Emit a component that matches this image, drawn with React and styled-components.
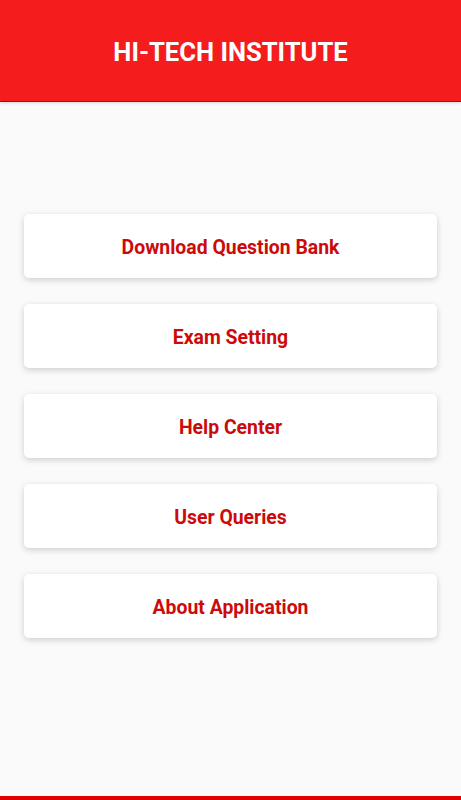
import React from 'react';
import styled, { createGlobalStyle } from 'styled-components';

const GlobalStyle = createGlobalStyle`
  html, body {
    margin: 0;
    padding: 0;
    background: #fafafa;
    font-family: Roboto, "Liberation Sans", Arial, sans-serif;
  }
`;

const Screen = styled.div`
  width: 100%;
  height: 800px;
  display: flex;
  flex-direction: column;
  background: #fafafa;
`;

const Header = styled.header`
  height: 102px;
  flex-shrink: 0;
  box-sizing: border-box;
  padding-top: 3px;
  background: #f41c1c;
  border-bottom: 1px solid #a11010;
  display: flex;
  align-items: center;
  justify-content: center;
  box-shadow: 0 1px 3px rgba(0, 0, 0, 0.15);
`;

const Title = styled.h1`
  margin: 0;
  color: #ffffff;
  font-size: 25.6px;
  font-weight: 700;
`;

const Menu = styled.main`
  flex: 1;
  display: flex;
  flex-direction: column;
  gap: 26px;
  padding: 112px 24px 0;
`;

const MenuButton = styled.button`
  height: 64px;
  width: 100%;
  padding: 2px 0 0;
  border: none;
  border-radius: 5px;
  background: #ffffff;
  box-shadow: 0 2px 6px rgba(0, 0, 0, 0.18);
  color: #cc0a0a;
  font-family: inherit;
  font-size: 19.4px;
  font-weight: 700;
  cursor: pointer;
`;

const BottomBar = styled.div`
  height: 4px;
  flex-shrink: 0;
  background: #e00000;
`;

const items = [
  'Download Question Bank',
  'Exam Setting',
  'Help Center',
  'User Queries',
  'About Application',
];

export default function App() {
  return (
    <Screen>
      <GlobalStyle />
      <Header>
        <Title>HI-TECH INSTITUTE</Title>
      </Header>
      <Menu>
        {items.map((label) => (
          <MenuButton key={label}>{label}</MenuButton>
        ))}
      </Menu>
      <BottomBar />
    </Screen>
  );
}
